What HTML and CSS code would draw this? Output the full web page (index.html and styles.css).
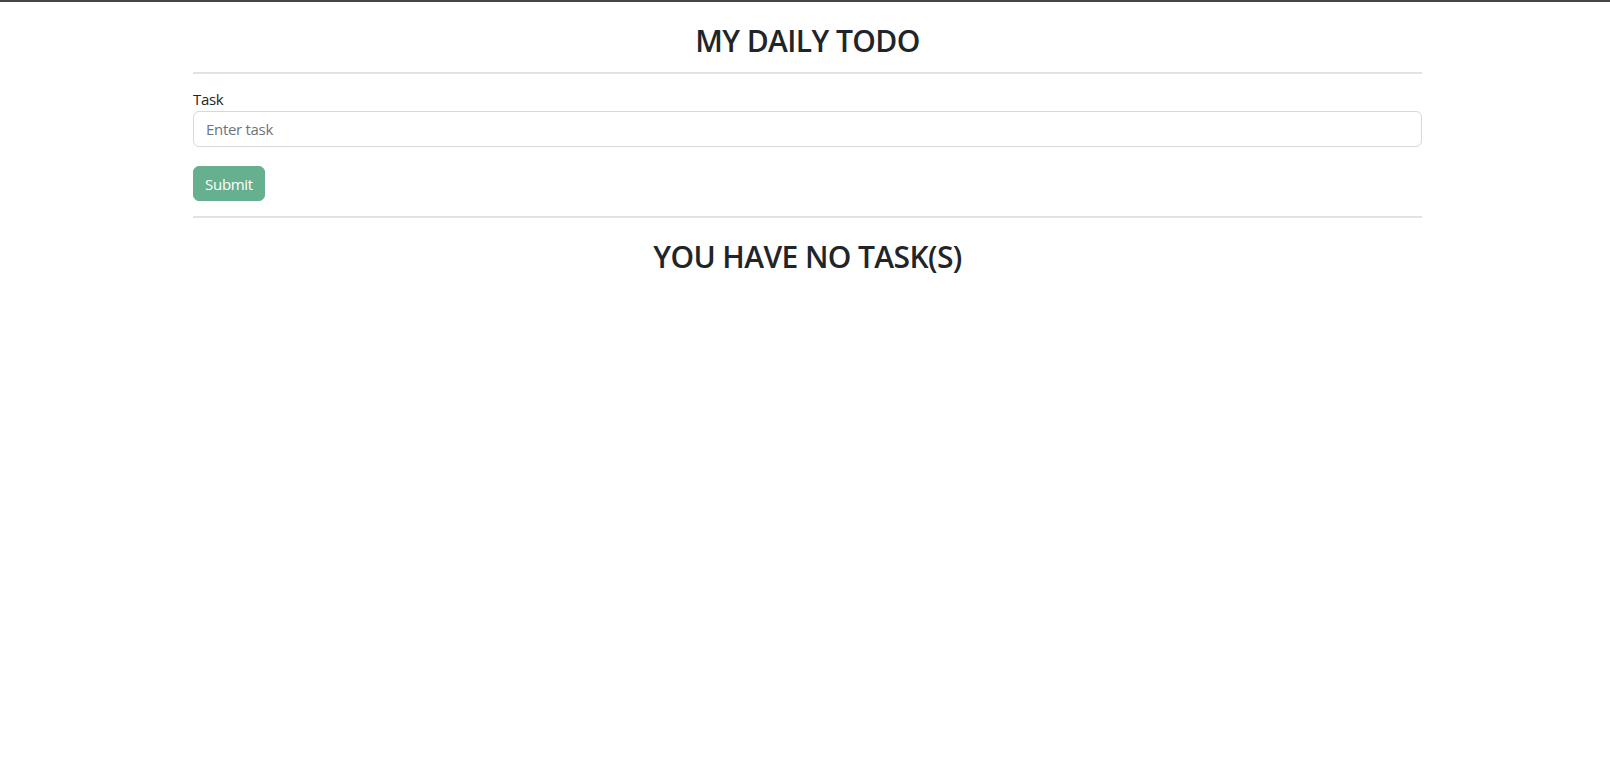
FILE: index.html
```html
<!DOCTYPE html>
<html lang="en">
<head>
<meta charset="utf-8">
<title>My Daily Todo</title>
<link rel="stylesheet" href="styles.css">
</head>
<body>
<main class="container">
  <h2 class="title">MY DAILY TODO</h2>
  <hr class="divider">
  <form class="task-form">
    <label class="field-label" for="task">Task</label>
    <input class="field-input" id="task" type="text" placeholder="Enter task">
    <button class="btn-submit" type="button">Submit</button>
  </form>
  <hr class="divider">
  <h2 class="empty">YOU HAVE NO TASK(S)</h2>
</main>
</body>
</html>
```

FILE: styles.css
```css
* { box-sizing: border-box; }

html, body {
  margin: 0;
  padding: 0;
  background: #ffffff;
}

body {
  border-top: 2px solid #454545;
  font-family: "Open Sans", "Noto Sans", "Liberation Sans", sans-serif;
  color: #212529;
  font-size: 15px;
}

.container {
  width: 1229px;
  margin-left: 193px;
  display: flex;
  flex-direction: column;
}

.title,
.empty {
  margin: 0;
  text-align: center;
  font-size: 30px;
  font-weight: 600;
  letter-spacing: -0.6px;
  line-height: 38px;
  color: #212529;
}

.title {
  margin-top: 20px;
}

.divider {
  margin: 0;
  border: 0;
  border-top: 2px solid #e2e2e2;
  height: 0;
}

.title + .divider {
  margin-top: 12px;
}

.task-form {
  display: flex;
  flex-direction: column;
  align-items: flex-start;
  padding-top: 16px;
  padding-bottom: 15px;
}

.field-label {
  font-size: 15px;
  letter-spacing: -0.3px;
  line-height: 19px;
  color: #212529;
  margin-bottom: 2px;
}

.field-input {
  width: 100%;
  height: 36px;
  padding: 0 12px;
  font-family: inherit;
  font-size: 15px;
  letter-spacing: -0.3px;
  color: #212529;
  border: 1px solid #d5d9de;
  border-radius: 6px;
  outline: none;
  background: #fff;
}

.field-input::placeholder {
  color: #6c757d;
}

.btn-submit {
  margin-top: 19px;
  height: 35px;
  width: 72px;
  padding: 0;
  font-family: inherit;
  font-size: 15px;
  letter-spacing: -0.3px;
  color: #ffffff;
  background: #66b08f;
  border: 1px solid #66b08f;
  border-radius: 6px;
}

.empty {
  margin-top: 20px;
}
```
